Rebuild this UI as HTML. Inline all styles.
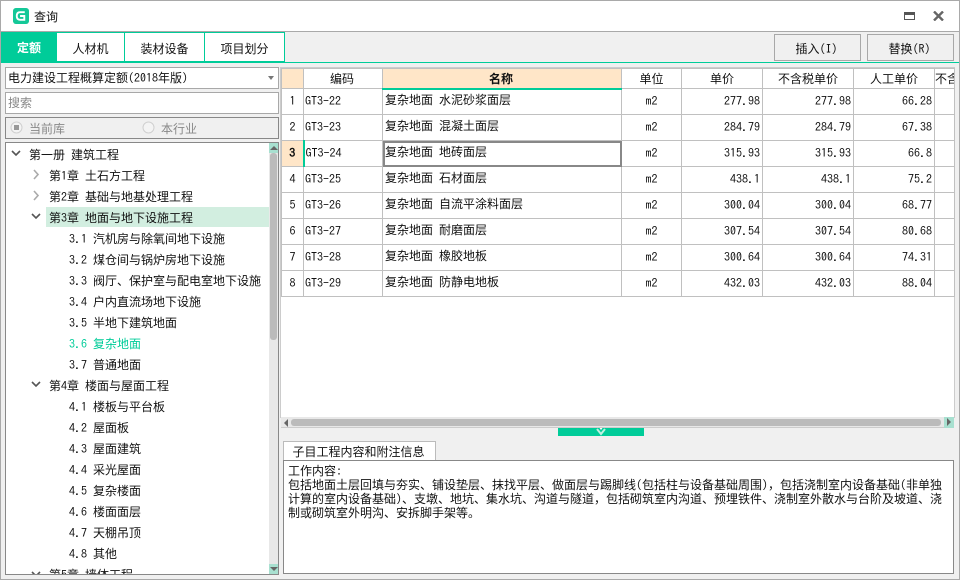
<!DOCTYPE html>
<html><head><meta charset="utf-8">
<style>
html,body{margin:0;padding:0;width:960px;height:580px;overflow:hidden;background:#f0f0f0}
body{position:relative;font-family:"WenQuanYi Zen Hei","Noto Sans CJK SC","Liberation Sans",sans-serif;font-size:12px;color:#111}
div,span{box-sizing:border-box}
i{font-family:"IPAGothic","Liberation Mono",monospace;font-style:normal;font-size:12px}
.a{position:absolute}
.t{position:absolute;white-space:pre;line-height:21px;height:21px;font-size:12px}
table{border-collapse:collapse;table-layout:fixed;position:absolute;left:281px;top:68px;width:673px}
td{border:1px solid #c0c0c0;padding:0 0 2px 0;height:26px;background:#fff;white-space:nowrap;overflow:hidden;font-size:12px;box-sizing:border-box}
tr.h td{height:20px;text-align:center;padding:0}
td.i{text-align:center;font-family:"IPAGothic",monospace;padding-top:1px}
td.n{padding-left:2px;padding-bottom:4px}
td.c{padding-left:1px;font-family:"IPAGothic","Liberation Mono",monospace;font-size:12px}
td.u{text-align:center;font-family:"IPAGothic",monospace}
td.r{text-align:right;padding-right:2px;font-family:"IPAGothic",monospace}
.tab{position:absolute;top:32px;height:30px;background:#fff;border:1px solid #00cc99;border-left:0;text-align:center;line-height:31px;font-size:12px}
.btn{position:absolute;top:34px;width:87px;height:27px;border:1px solid #a8a8a8;background:#f0f0f0;text-align:center;line-height:27px;padding-right:2px}
</style></head><body>

<div class="a" style="left:0;top:0;width:960px;height:580px;border:1px solid #a9a9a9"></div>
<div class="a" style="left:1px;top:1px;width:958px;height:30px;background:#fff"></div>
<div class="a" style="left:1px;top:31px;width:958px;height:1px;background:#a9a9a9"></div>

<svg class="a" style="left:13px;top:8px" width="16" height="16" viewBox="0 0 17 17"><rect width="17" height="17" rx="3" fill="#14c898"/><path d="M12.5 4.5H7.5Q4 4.5 4 8.5T7.5 12.5H12V8.5H7.5" fill="none" stroke="#fff" stroke-width="2"/></svg>
<div class="t" style="left:34px;top:6px">查询</div>

<svg class="a" style="left:904px;top:12px" width="12" height="9"><rect x=".5" y=".5" width="10" height="7" fill="#fff" stroke="#555"/><rect x="0" y="0" width="11" height="3" fill="#555"/></svg>
<svg class="a" style="left:933px;top:11px" width="11" height="10"><path d="M1 0.5L10 9.5M10 0.5L1 9.5" stroke="#666" stroke-width="2.4"/></svg>

<div class="a" style="left:1px;top:32px;width:958px;height:30px;background:#f0f0f0"></div>
<div class="a" style="left:1px;top:62px;width:958px;height:1px;background:#00cc99"></div>
<div class="a" style="left:1px;top:63px;width:958px;height:516px;background:#f0f0f0"></div>
<div class="a" style="left:1px;top:32px;width:56px;height:31px;background:#00cc99;color:#fff;text-align:center;line-height:31px;font-weight:bold;font-size:12px">定额</div>
<div class="tab" style="left:57px;width:68px">人材机</div>
<div class="tab" style="left:125px;width:80px">装材设备</div>
<div class="tab" style="left:205px;width:80px">项目划分</div>
<div class="btn" style="left:774px">插入<i>(I)</i></div>
<div class="btn" style="left:867px">替换<i>(R)</i></div>

<div class="a" style="left:5px;top:67px;width:274px;height:22px;border:1px solid #a8a8a8;background:#fff;padding-left:2px;line-height:20px">电力建设工程概算定额<i>(2018</i>年版<i>)</i></div>
<svg class="a" style="left:267px;top:76px" width="8" height="5"><path d="M1 0H7L4 4Z" fill="#777"/></svg>
<div class="a" style="left:5px;top:92px;width:274px;height:22px;border:1px solid #a8a8a8;background:#fff;padding-left:2px;line-height:20px;color:#888">搜索</div>
<div class="a" style="left:5px;top:117px;width:274px;height:22px;border:1px solid #888;background:#f0f0f0"></div>
<svg class="a" style="left:10px;top:121px" width="13" height="13"><circle cx="6.5" cy="6.5" r="5.5" fill="#f4f4f4" stroke="#d0d0d0"/><rect x="4" y="4" width="5" height="5" fill="#999"/></svg>
<div class="t" style="left:29px;top:118px;color:#888">当前库</div>
<svg class="a" style="left:142px;top:121px" width="13" height="13"><circle cx="6.5" cy="6.5" r="5.5" fill="#f4f4f4" stroke="#d0d0d0"/></svg>
<div class="t" style="left:161px;top:118px;color:#888">本行业</div>

<div class="a" style="left:5px;top:142px;width:274px;height:433px;border:1px solid #888;background:#fff;overflow:hidden">
<div class="a" style="left:263px;top:0;width:10px;height:431px;background:#e8e8e8"></div>
<div class="a" style="left:263px;top:0;width:10px;height:10px;background:#a8e0d0"></div>
<div class="a" style="left:263px;top:421px;width:10px;height:10px;background:#a8e0d0"></div>
<div class="a" style="left:264px;top:10px;width:7px;height:187px;background:#bbb;border-radius:3px"></div>
<svg class="a" style="left:264px;top:3px" width="8" height="5"><path d="M0 4H8L4 0Z" fill="#666"/></svg>
<svg class="a" style="left:264px;top:424px" width="8" height="5"><path d="M0 0H8L4 4Z" fill="#666"/></svg>
<div class="a" style="left:40px;top:64px;width:223px;height:20px;background:#d2eee0"></div>

<svg class="a" style="left:5px;top:7px" width="10" height="7"><path d="M1 1L5 5L9 1" fill="none" stroke="#555" stroke-width="1.6"/></svg>
<div class="t" style="left:23px;top:1px">第一册<i> </i>建筑工程</div>
<svg class="a" style="left:27px;top:26px" width="7" height="11"><path d="M1 1L5 5.5L1 10" fill="none" stroke="#aaa" stroke-width="1.6"/></svg>
<div class="t" style="left:43px;top:22px">第<i>1</i>章<i> </i>土石方工程</div>
<svg class="a" style="left:27px;top:47px" width="7" height="11"><path d="M1 1L5 5.5L1 10" fill="none" stroke="#aaa" stroke-width="1.6"/></svg>
<div class="t" style="left:43px;top:43px">第<i>2</i>章<i> </i>基础与地基处理工程</div>
<svg class="a" style="left:25px;top:70px" width="10" height="7"><path d="M1 1L5 5L9 1" fill="none" stroke="#555" stroke-width="1.6"/></svg>
<div class="t" style="left:43px;top:64px">第<i>3</i>章<i> </i>地面与地下设施工程</div>
<div class="t" style="left:63px;top:85px"><i>3.1 </i>汽机房与除氧间地下设施</div>
<div class="t" style="left:63px;top:106px"><i>3.2 </i>煤仓间与锅炉房地下设施</div>
<div class="t" style="left:63px;top:127px"><i>3.3 </i>阀厅、保护室与配电室地下设施</div>
<div class="t" style="left:63px;top:148px"><i>3.4 </i>户内直流场地下设施</div>
<div class="t" style="left:63px;top:169px"><i>3.5 </i>半地下建筑地面</div>
<div class="t" style="left:63px;top:190px;color:#00cc99"><i>3.6 </i>复杂地面</div>
<div class="t" style="left:63px;top:211px"><i>3.7 </i>普通地面</div>
<svg class="a" style="left:25px;top:238px" width="10" height="7"><path d="M1 1L5 5L9 1" fill="none" stroke="#555" stroke-width="1.6"/></svg>
<div class="t" style="left:43px;top:232px">第<i>4</i>章<i> </i>楼面与屋面工程</div>
<div class="t" style="left:63px;top:253px"><i>4.1 </i>楼板与平台板</div>
<div class="t" style="left:63px;top:274px"><i>4.2 </i>屋面板</div>
<div class="t" style="left:63px;top:295px"><i>4.3 </i>屋面建筑</div>
<div class="t" style="left:63px;top:316px"><i>4.4 </i>采光屋面</div>
<div class="t" style="left:63px;top:337px"><i>4.5 </i>复杂楼面</div>
<div class="t" style="left:63px;top:358px"><i>4.6 </i>楼面面层</div>
<div class="t" style="left:63px;top:379px"><i>4.7 </i>天棚吊顶</div>
<div class="t" style="left:63px;top:400px"><i>4.8 </i>其他</div>
<svg class="a" style="left:25px;top:428px" width="10" height="7"><path d="M1 1L5 5L9 1" fill="none" stroke="#555" stroke-width="1.6"/></svg>
<div class="t" style="left:43px;top:421px">第<i>5</i>章<i> </i>墙体工程</div>
</div>

<div class="a" style="left:280px;top:67px;width:675px;height:351px;background:#fff;border:1px solid #ccc;overflow:hidden"></div>
<table>
<colgroup><col style="width:22px"><col style="width:79px"><col style="width:239px"><col style="width:60px"><col style="width:81px"><col style="width:91px"><col style="width:81px"><col style="width:20px"></colgroup>
<tr class="h"><td style="background:#ffe6c8"></td><td style="padding-right:2px">编码</td><td style="background:#ffe6c8;font-weight:bold;border-bottom:2px solid #00cc99;padding-right:2px">名称</td><td>单位</td><td>单价</td><td>不含税单价</td><td>人工单价</td><td style="text-align:left">不含</td></tr>
<tr><td class="i">1</td><td class="c">GT3-22</td><td class="n">复杂地面<i> </i>水泥砂浆面层</td><td class="u">m2</td><td class="r">277.98</td><td class="r">277.98</td><td class="r">66.28</td><td></td></tr>
<tr><td class="i">2</td><td class="c">GT3-23</td><td class="n">复杂地面<i> </i>混凝土面层</td><td class="u">m2</td><td class="r">284.79</td><td class="r">284.79</td><td class="r">67.38</td><td></td></tr>
<tr><td class="i" style="background:#ffe6c8;font-weight:bold;border-right:2px solid #00cc99">3</td><td class="c">GT3-24</td><td class="n" style="outline:2px solid #888;outline-offset:-2px">复杂地面<i> </i>地砖面层</td><td class="u">m2</td><td class="r">315.93</td><td class="r">315.93</td><td class="r">66.8</td><td></td></tr>
<tr><td class="i">4</td><td class="c">GT3-25</td><td class="n">复杂地面<i> </i>石材面层</td><td class="u">m2</td><td class="r">438.1</td><td class="r">438.1</td><td class="r">75.2</td><td></td></tr>
<tr><td class="i">5</td><td class="c">GT3-26</td><td class="n">复杂地面<i> </i>自流平涂料面层</td><td class="u">m2</td><td class="r">300.04</td><td class="r">300.04</td><td class="r">68.77</td><td></td></tr>
<tr><td class="i">6</td><td class="c">GT3-27</td><td class="n">复杂地面<i> </i>耐磨面层</td><td class="u">m2</td><td class="r">307.54</td><td class="r">307.54</td><td class="r">80.68</td><td></td></tr>
<tr><td class="i">7</td><td class="c">GT3-28</td><td class="n">复杂地面<i> </i>橡胶地板</td><td class="u">m2</td><td class="r">300.64</td><td class="r">300.64</td><td class="r">74.31</td><td></td></tr>
<tr><td class="i">8</td><td class="c">GT3-29</td><td class="n">复杂地面<i> </i>防静电地板</td><td class="u">m2</td><td class="r">432.03</td><td class="r">432.03</td><td class="r">88.04</td><td></td></tr>
</table>

<div class="a" style="left:281px;top:417px;width:673px;height:11px;background:#e8e8e8;border-bottom:1px solid #ccc"></div>
<div class="a" style="left:291px;top:419px;width:650px;height:7px;background:#bbb;border-radius:3px"></div>
<svg class="a" style="left:284px;top:419px" width="5" height="8"><path d="M4 0V8L0 4Z" fill="#666"/></svg>
<div class="a" style="left:944px;top:417px;width:10px;height:11px;background:#a8e0d0"></div>
<svg class="a" style="left:947px;top:418px" width="5" height="8"><path d="M0 0V8L4 4Z" fill="#666"/></svg>
<div class="a" style="left:558px;top:428px;width:86px;height:8px;background:#00cc99"></div>
<svg class="a" style="left:596px;top:428px" width="10" height="8"><path d="M3.5 0H6.5L5 2Z" fill="#fff"/><path d="M1 1L5 6L9 1" fill="none" stroke="#bff0e0" stroke-width="2"/></svg>

<div class="a" style="left:283px;top:441px;width:153px;height:20px;background:#fff;border:1px solid #bbb;border-bottom:0;text-align:center;line-height:19px;font-size:12px;padding-right:2px">子目工程内容和附注信息</div>
<div class="a" style="left:283px;top:460px;width:671px;height:114px;background:#fff;border:1px solid #888;padding:3px 4px 0 4px;line-height:14px;font-size:12px;white-space:pre">工作内容<i>:</i>
包括地面土层回填与夯实、铺设垫层、抹找平层、做面层与踢脚线<i>(</i>包括柱与设备基础周围<i>)</i>，包括浇制室内设备基础<i>(</i>非单独
计算的室内设备基础<i>)</i>、支墩、地坑、集水坑、沟道与隧道，包括砌筑室内沟道、预埋铁件、浇制室外散水与台阶及坡道、浇
制或砌筑室外明沟、安拆脚手架等。</div>

</body></html>
